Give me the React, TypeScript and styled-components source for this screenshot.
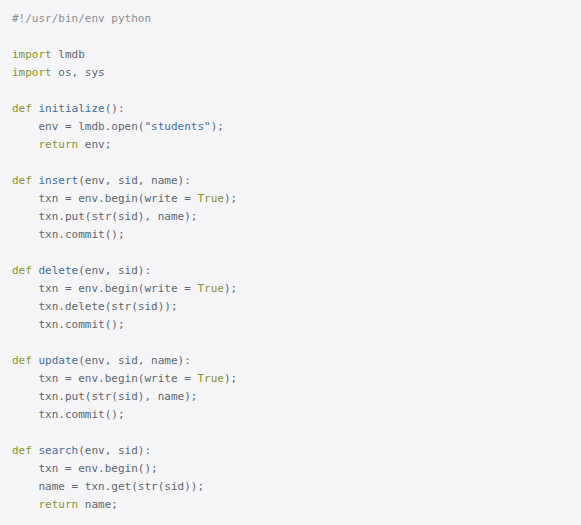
import React from "react";
import styled, { createGlobalStyle } from "styled-components";

const Global = createGlobalStyle`
  html, body { margin: 0; padding: 0; background: #f6f6f8; }
`;

const Pre = styled.pre`
  margin: 0;
  padding: 10px 12px 12px 12px;
  min-height: 525px;
  box-sizing: border-box;
  background: #f6f6f8;
  font-family: "DejaVu Sans Mono", "Liberation Mono", monospace;
  font-size: 11px;
  line-height: 18px;
  color: #5d6670;
  white-space: pre;
`;

const Tok = styled.span<{ $k: "kw" | "fn" | "cm" | "st" }>`
  color: ${(p) =>
    p.$k === "kw" ? "#86922f" : p.$k === "fn" ? "#3e6f9f" : p.$k === "cm" ? "#8a8f94" : "#3e6f9f"};
`;

const K = ({ children }: { children: React.ReactNode }) => <Tok $k="kw">{children}</Tok>;
const F = ({ children }: { children: React.ReactNode }) => <Tok $k="fn">{children}</Tok>;

export default function App() {
  return (
    <>
      <Global />
      <Pre>
        <Tok $k="cm">#!/usr/bin/env python</Tok>
        {"\n\n"}
        <K>import</K> lmdb{"\n"}
        <K>import</K> os, sys{"\n\n"}
        <K>def</K> <F>initialize</F>():{"\n"}
        {"    env = lmdb.open("}<Tok $k="st">"students"</Tok>);{"\n"}
        {"    "}<K>return</K> env;{"\n\n"}
        <K>def</K> <F>insert</F>(env, sid, name):{"\n"}
        {"    txn = env.begin(write = "}<K>True</K>);{"\n"}
        {"    txn.put(str(sid), name);\n"}
        {"    txn.commit();\n\n"}
        <K>def</K> <F>delete</F>(env, sid):{"\n"}
        {"    txn = env.begin(write = "}<K>True</K>);{"\n"}
        {"    txn.delete(str(sid));\n"}
        {"    txn.commit();\n\n"}
        <K>def</K> <F>update</F>(env, sid, name):{"\n"}
        {"    txn = env.begin(write = "}<K>True</K>);{"\n"}
        {"    txn.put(str(sid), name);\n"}
        {"    txn.commit();\n\n"}
        <K>def</K> <F>search</F>(env, sid):{"\n"}
        {"    txn = env.begin();\n"}
        {"    name = txn.get(str(sid));\n"}
        {"    "}<K>return</K> name;
      </Pre>
    </>
  );
}
